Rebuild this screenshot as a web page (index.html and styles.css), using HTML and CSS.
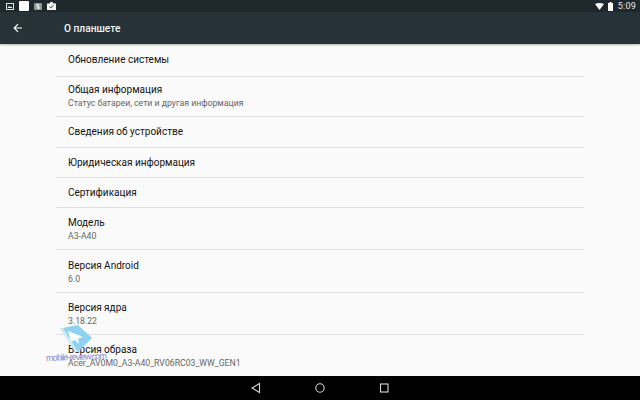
FILE: index.html
```html
<!DOCTYPE html>
<html lang="ru">
<head>
    <meta charset="UTF-8">
    <title>О планшете</title>
    <link rel="stylesheet" href="styles.css">
</head>
<body>
    <div class="status-bar">
        <div class="status-left">
            <svg width="8" height="7" viewBox="0 0 8 7"><rect x="0.5" y="0.5" width="7" height="6" fill="#1f282c" stroke="#dfe2e2"/><path d="M1.5 5l1.5-2 1.5 1 1-.6L6.5 5z" fill="#eef0f0"/></svg>
            <span class="note-white"></span>
            <svg width="8" height="7" viewBox="0 0 8 7"><rect width="8" height="7" rx="1" fill="#8d9597"/><path d="M2 1h3l1 5H3z" fill="#d5d8d8"/></svg>
            <svg width="9" height="8" viewBox="0 0 9 8"><path d="M0 1.5h2.5L3.5 0h2l1 1.5H9V8H0z" fill="#f4f5f5"/><path d="M2.5 4.8l1.3 1L6.5 3.2" fill="none" stroke="#263238"/></svg>
        </div>
        <div class="status-right">
            <svg width="9" height="7" viewBox="0 0 9 7"><path d="M0 1Q4.5-1 9 1L4.5 7z" fill="#fff"/></svg>
            <svg class="battery" width="5" height="9" viewBox="0 0 5 9"><path d="M1.5 0h2v1H5v8H0V1h1.5z" fill="#fff"/></svg>
            <span class="clock">5:09</span>
        </div>
    </div>
    <header class="toolbar">
        <svg width="10" height="10" viewBox="0 0 10 10"><path d="M9 5H1.5M5 1.2L1.2 5 5 8.8" fill="none" stroke="#fff" stroke-width="1.2"/></svg>
        <h1>О планшете</h1>
    </header>
    <main class="list">
        <div class="row row-1"><div class="title">Обновление системы</div></div>
        <div class="row row-2"><div class="title">Общая информация</div><div class="sub">Статус батареи, сети и другая информация</div></div>
        <div class="row row-3"><div class="title">Сведения об устройстве</div></div>
        <div class="row row-4"><div class="title">Юридическая информация</div></div>
        <div class="row row-4"><div class="title">Сертификация</div></div>
        <div class="row row-6"><div class="title">Модель</div><div class="sub">A3-A40</div></div>
        <div class="row row-7"><div class="title">Версия Android</div><div class="sub">6.0</div></div>
        <div class="row row-6"><div class="title">Версия ядра</div><div class="sub">3.18.22</div></div>
        <div class="row row-last"><div class="title">Версия образа</div><div class="sub">Acer_AV0M0_A3-A40_RV06RC03_WW_GEN1</div></div>
    </main>
    <nav class="nav-bar">
        <svg width="14" height="14" viewBox="0 0 14 14"><path d="M10.5 2.5v9L3 7z" fill="none" stroke="#d8d8d8" stroke-width="1.1"/></svg>
        <svg width="14" height="14" viewBox="0 0 14 14"><circle cx="7" cy="7" r="4.2" fill="none" stroke="#d8d8d8" stroke-width="1.1"/></svg>
        <svg width="14" height="14" viewBox="0 0 14 14"><rect x="3.5" y="3" width="7.5" height="8" fill="none" stroke="#d8d8d8" stroke-width="1.1"/></svg>
    </nav>
    <div class="watermark">
        <svg class="wm-mark" width="34" height="28" viewBox="0 0 34 28"><path d="M0 3.5L18 0l14 13-14 14z" fill="#8ed2f0"/><path d="M0 3.5L15 27l3 0L3 3z" fill="#cfe9f5"/><path d="M8 6l15 6-5 1.5 1 5.5-4-4-4 1.5z" fill="#fff"/></svg>
        <span class="wm-text">mobile-review.com</span>
    </div>
</body>
</html>
```
FILE: styles.css
```css
body {
    position: relative;
    width: 640px;
    height: 400px;
    margin: 0;
    overflow: hidden;
    display: flex;
    flex-direction: column;
    background: #fafafa;
    font-family: Roboto, "Noto Sans", sans-serif;
}
.status-bar {
    height: 12px;
    display: flex;
    justify-content: space-between;
    align-items: center;
    padding: 0 4px 0 6px;
    background: #1f282c;
}
.status-left, .status-right {
    display: flex;
    align-items: center;
}
.status-left {
    gap: 5px;
}
.note-white {
    width: 10px;
    height: 10px;
    border-radius: 1px;
    background: #fff;
}
.battery {
    margin: 0 5px 0 4px;
}
.clock {
    color: #e8eaea;
    font-size: 9px;
    letter-spacing: 0.2px;
}
.toolbar {
    height: 32px;
    display: flex;
    align-items: center;
    padding-left: 13px;
    background: #263238;
    box-shadow: 0 1px 2px rgba(0, 0, 0, 0.3);
}
.toolbar h1 {
    margin: 0 0 0 41px;
    color: #f4f5f5;
    font-size: 10.2px;
    font-weight: 500;
}
.list {
    flex: 1;
    margin: 0 56px;
    overflow: hidden;
}
.row {
    box-sizing: border-box;
    display: flex;
    flex-direction: column;
    justify-content: center;
    padding: 0 0 1px 12px;
    border-bottom: 1px solid #dfdfdf;
}
.row-1 { height: 33px; }
.row-2 { height: 40px; }
.row-3 { height: 31px; }
.row-4 { height: 30px; }
.row-6 { height: 42px; padding: 1px 0 0 12px; }
.row-7 { height: 43px; padding: 1px 0 0 12px; }
.row-last { height: 42px; border-bottom: 0; }
.title {
    color: #141414;
    font-size: 10px;
    line-height: 13px;
}
.sub {
    margin-top: 1px;
    color: #666;
    font-size: 8.7px;
    line-height: 12px;
}
.nav-bar {
    height: 24px;
    flex-shrink: 0;
    display: flex;
    justify-content: center;
    align-items: center;
    gap: 50px;
    background: #000;
}
.watermark {
    position: absolute;
    left: 46px;
    top: 325px;
    display: flex;
    flex-direction: column;
    width: 56px;
    pointer-events: none;
}
.wm-mark {
    margin-left: 14px;
}
.wm-text {
    color: #6f76bd;
    opacity: 0.85;
    font-family: "Liberation Sans", sans-serif;
    font-size: 9px;
    line-height: 9px;
    letter-spacing: -0.85px;
    white-space: nowrap;
    transform: rotate(-2deg);
}
```
